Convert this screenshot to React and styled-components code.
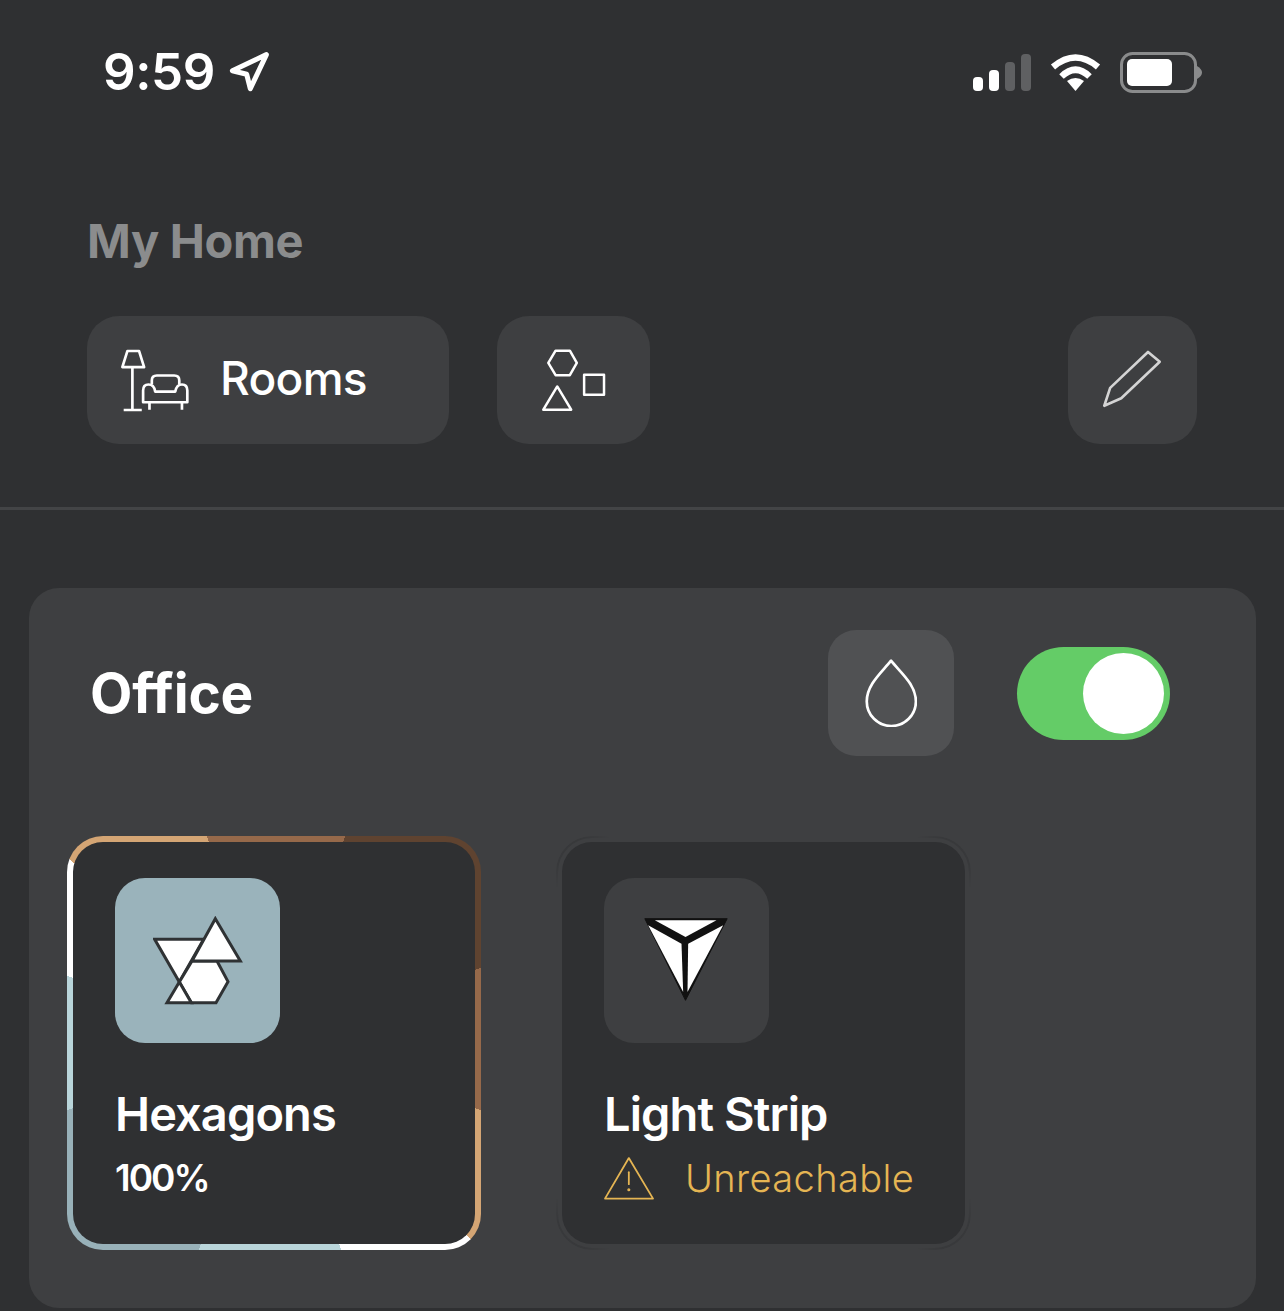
import React from "react";
import styled, { createGlobalStyle } from "styled-components";
import { Navigation } from "lucide-react";

const GlobalStyle = createGlobalStyle`
  html, body {
    margin: 0;
    background: #2f3032;
    font-family: "Inter", "Liberation Sans", sans-serif;
  }
  * { box-sizing: border-box; }
`;

const Page = styled.div`
  width: 1284px;
  height: 1311px;
  overflow: hidden;
  background: #2f3032;
  color: #fff;
`;

const StatusBar = styled.div`
  height: 144px;
  padding: 0 82px 0 103px;
  display: flex;
  align-items: center;
  justify-content: space-between;
`;

const TimeGroup = styled.div`
  display: flex;
  align-items: center;
  gap: 12px;
`;

const Time = styled.span`
  font-size: 51px;
  font-weight: 600;
  letter-spacing: -0.4px;
  line-height: 56px;
`;

const StatusIcons = styled.div`
  display: flex;
  align-items: center;
  gap: 19px;
`;

const Top = styled.header`
  padding: 0 87px;
`;

const Title = styled.h1`
  margin: 69px 0 47px;
  font-size: 47px;
  line-height: 56px;
  font-weight: 700;
  letter-spacing: -0.35px;
  color: #8b8c8d;
`;

const ButtonRow = styled.div`
  display: flex;
  align-items: stretch;
  height: 128px;
`;

const ToolButton = styled.button`
  width: ${(p) => p.$w}px;
  margin-left: ${(p) => p.$ml || 0}px;
  display: flex;
  align-items: center;
  justify-content: ${(p) => (p.$wide ? "flex-start" : "center")};
  gap: 29px;
  padding: ${(p) => (p.$wide ? "0 0 0 32px" : "0")};
  border: 0;
  border-radius: 32px;
  background: #3e3f41;
  color: #fff;
  font-family: inherit;
`;

const ButtonLabel = styled.span`
  padding-bottom: 4px;
  font-size: 46px;
  font-weight: 500;
  letter-spacing: -0.7px;
`;

const Divider = styled.hr`
  margin: 63px 0 78px;
  height: 3px;
  border: 0;
  background: #434446;
`;

const Panel = styled.section`
  margin: 0 28px 0 29px;
  height: 720px;
  padding-top: 42px;
  border-radius: 30px;
  background: #3e3f41;
`;

const PanelHeader = styled.div`
  height: 126px;
  margin: 0 86px 0 61px;
  display: flex;
  align-items: center;
`;

const RoomName = styled.h2`
  flex: 1;
  margin: 0;
  font-size: 55px;
  font-weight: 700;
  letter-spacing: -0.2px;
`;

const DropButton = styled.div`
  width: 126px;
  height: 126px;
  margin-right: 63px;
  display: flex;
  align-items: center;
  justify-content: center;
  border-radius: 28px;
  background: #505153;
`;

const Toggle = styled.div`
  width: 153px;
  height: 93px;
  padding: 6px;
  display: flex;
  justify-content: flex-end;
  border-radius: 47px;
  background: #64cc67;
`;

const Thumb = styled.div`
  width: 81px;
  height: 81px;
  border-radius: 50%;
  background: #fff;
`;

const CardGrid = styled.div`
  margin: 80px 0 0 38px;
  display: grid;
  grid-template-columns: 414px 415px;
  column-gap: 75px;
`;

const activeRing = `conic-gradient(
  #96694a 0deg 19deg,
  #5f4330 19deg 70deg,
  #96694a 70deg 108deg,
  #d4a574 108deg 135deg,
  #fff 135deg 162deg,
  #b9d5da 162deg 200deg,
  #98b1b9 200deg 252deg,
  #b9d5da 252deg 288deg,
  #fff 288deg 312deg,
  #d4a574 312deg 342deg,
  #96694a 342deg 360deg
)`;

const cornerMask = `conic-gradient(
  transparent 0deg 37deg, #000 41deg 49deg, transparent 53deg 127deg,
  #000 131deg 139deg, transparent 143deg 217deg,
  #000 221deg 229deg, transparent 233deg 307deg,
  #000 311deg 319deg, transparent 323deg 360deg
)`;

const CardFrame = styled.div`
  position: relative;
  height: 414px;
  padding: 6px;
  border-radius: 36px;
  background: ${(p) => (p.$active ? activeRing : "transparent")};

  /* faint corner arcs on the idle card */
  &::before {
    content: "";
    display: ${(p) => (p.$active ? "none" : "block")};
    position: absolute;
    inset: 0;
    border: 2px solid #38393b;
    border-radius: 36px;
    mask-image: ${cornerMask};
  }
`;

const Card = styled.article`
  position: relative;
  height: 100%;
  padding: 36px 42px 0;
  border-radius: 30px;
  background: #2f3032;
`;

const Tile = styled.div`
  width: 165px;
  height: 165px;
  display: flex;
  align-items: center;
  justify-content: center;
  border-radius: 30px;
  background: ${(p) => p.$bg};
`;

const DeviceName = styled.div`
  margin-top: 43px;
  font-size: 47px;
  line-height: 56px;
  font-weight: 600;
  letter-spacing: -0.9px;
`;

const Brightness = styled.div`
  margin-top: 14px;
  font-size: 37px;
  line-height: 44px;
  font-weight: 600;
  letter-spacing: -2px;
`;

const Warning = styled.div`
  margin-top: 14px;
  height: 44px;
  display: flex;
  align-items: center;
  gap: 31px;
  font-size: 38px;
  font-weight: 300;
  letter-spacing: 0.4px;
  color: #e5b553;
`;

const SignalIcon = () => (
  <svg width="58" height="37" viewBox="0 0 58 37">
    <rect x="0" y="23" width="10" height="14" rx="4" fill="#fff" />
    <rect x="16" y="16" width="10" height="21" rx="4" fill="#fff" />
    <rect x="32" y="8" width="10" height="29" rx="4" fill="#5f6062" />
    <rect x="48" y="0" width="10" height="37" rx="4" fill="#5f6062" />
  </svg>
);

const WifiIcon = () => (
  <svg width="51" height="37" viewBox="0 0 51 37">
    <path d="M3 13 Q25.5 -6 48 13" fill="none" stroke="#fff" strokeWidth="6.5" />
    <path d="M11.5 22.5 Q25.5 9 39.5 22.5" fill="none" stroke="#fff" strokeWidth="6.5" />
    <path d="M17 27 Q25.5 21 34 27 L25.5 37 Z" fill="#fff" />
  </svg>
);

const BatteryIcon = () => (
  <svg width="82" height="41" viewBox="0 0 82 41">
    <rect x="1.5" y="1.5" width="74" height="38" rx="11" fill="none" stroke="#8a8b8c" strokeWidth="3" />
    <rect x="7" y="7" width="45" height="27" rx="5" fill="#fff" />
    <path d="M77 14 Q82 17 82 20.5 Q82 24 77 27 Z" fill="#8a8b8c" />
  </svg>
);

const RoomsIcon = () => (
  <svg width="72" height="67" viewBox="120 110 215 200" fill="none" stroke="#fff" strokeWidth="8" strokeLinejoin="round">
    <path d="M145 122 H180 L195 170 H130 Z" />
    <path d="M160 170 V298 M134 298 H188" />
    <path d="M218 222 V210 Q218 195 233 195 H285 Q300 195 300 210 V222" />
    <path d="M192 275 V240 Q192 222 208 222 Q225 222 228 243 H288 Q292 222 308 222 Q324 222 324 240 V275 Z" />
    <path d="M211 275 V297 M308 275 V297" />
  </svg>
);

const ShapesIcon = () => (
  <svg width="68" height="67" viewBox="150 110 205 200" fill="none" stroke="#fff" strokeWidth="7.5" strokeLinejoin="round">
    <polygon points="175,157 197,120 240,120 261,157 240,194 197,194" />
    <rect x="283" y="193" width="60" height="60" />
    <polygon points="202,228 244,298 160,298" />
  </svg>
);

const PencilIcon = () => (
  <svg width="62" height="62" viewBox="123 118 190 186" fill="none" stroke="#d4d4d4" strokeWidth="8" strokeLinejoin="round">
    <polygon points="264,125 300,155 182,267 130,290 148,235" />
  </svg>
);

const DropIcon = () => (
  <svg width="52" height="68" viewBox="167 119 154 202" fill="none" stroke="#fff" strokeWidth="8" strokeLinejoin="round">
    <path d="M244 124 C215 160 172 195 172 245 A73 73 0 0 0 318 245 C318 195 273 160 244 124 Z" />
  </svg>
);

const HexagonsLogo = () => (
  <svg width="90" height="90" viewBox="68 60 270 270" stroke="#2f3234" strokeWidth="9" fill="#fff" strokeLinejoin="miter">
    <polygon points="73,130 220,130 147,258" />
    <polygon points="185,195 260,195 293,257 257,320 183,320 147,258" />
    <polygon points="147,258 183,320 110,320" />
    <polygon points="255,68 330,195 185,195" />
  </svg>
);

const StripLogo = () => (
  <svg width="87" height="85" viewBox="70 68 260 255">
    <polygon points="75,70 322,70 197,315" fill="#111" stroke="#111" strokeWidth="3" strokeLinejoin="round" />
    <polygon points="105,75 290,75 197,125" fill="#fff" />
    <polygon points="85,90 185,145 190,290" fill="#fff" />
    <polygon points="310,90 205,145 203,290" fill="#fff" />
  </svg>
);

const WarningIcon = () => (
  <svg width="50" height="45" viewBox="177 228 153 133" fill="none" stroke="#e5b553" strokeWidth="5.5" strokeLinejoin="round" strokeLinecap="round">
    <path d="M253 232 L327 356 H180 Z" />
    <path d="M253 275 V312" />
    <circle cx="253" cy="329" r="2" fill="#e5b553" />
  </svg>
);

export default function App() {
  return (
    <Page>
      <GlobalStyle />
      <StatusBar>
        <TimeGroup>
          <Time>9:59</Time>
          <Navigation size={43} strokeWidth={2.8} color="#fff" />
        </TimeGroup>
        <StatusIcons>
          <SignalIcon />
          <WifiIcon />
          <BatteryIcon />
        </StatusIcons>
      </StatusBar>

      <Top>
        <Title>My Home</Title>
        <ButtonRow>
          <ToolButton $w={362} $wide>
            <RoomsIcon />
            <ButtonLabel>Rooms</ButtonLabel>
          </ToolButton>
          <ToolButton $w={153} $ml={48}>
            <ShapesIcon />
          </ToolButton>
          <ToolButton $w={129} $ml={418}>
            <PencilIcon />
          </ToolButton>
        </ButtonRow>
      </Top>

      <Divider />

      <Panel>
        <PanelHeader>
          <RoomName>Office</RoomName>
          <DropButton>
            <DropIcon />
          </DropButton>
          <Toggle>
            <Thumb />
          </Toggle>
        </PanelHeader>

        <CardGrid>
          <CardFrame $active>
            <Card>
              <Tile $bg="#9ab3bb">
                <HexagonsLogo />
              </Tile>
              <DeviceName>Hexagons</DeviceName>
              <Brightness>100%</Brightness>
            </Card>
          </CardFrame>
          <CardFrame>
            <Card>
              <Tile $bg="#3e3f41">
                <StripLogo />
              </Tile>
              <DeviceName>Light Strip</DeviceName>
              <Warning>
                <WarningIcon />
                <span>Unreachable</span>
              </Warning>
            </Card>
          </CardFrame>
        </CardGrid>
      </Panel>
    </Page>
  );
}
